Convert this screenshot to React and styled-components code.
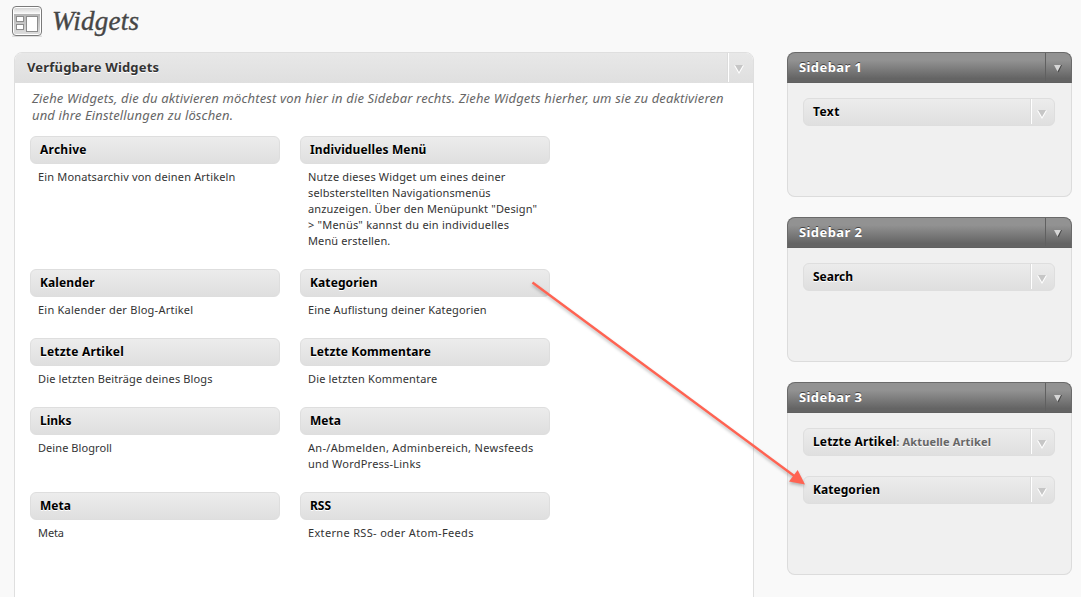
import React from "react";
import styled, { createGlobalStyle } from "styled-components";

const Global = createGlobalStyle`
  * { box-sizing: border-box; }
  body {
    margin: 0;
    background: #f9f9f9;
    color: #333;
    font-family: "Lucida Grande", "Noto Sans", "Open Sans", sans-serif;
    overflow: hidden;
  }
`;

const Screen = styled.div`
  position: relative;
  width: 1081px;
  height: 597px;
  overflow: hidden;
`;

const PageHead = styled.header`
  display: flex;
  align-items: flex-start;
  gap: 9px;
  height: 52px;
  padding: 4px 0 0 11px;
`;

const PageTitle = styled.h1`
  margin: 0;
  color: #464646;
  font: italic 400 27px/35px Georgia, "Liberation Serif", serif;
  letter-spacing: 0.25px;
  text-shadow: 0 1px 0 #fff;
  -webkit-text-stroke: 0.4px #464646;
`;

const Columns = styled.main`
  display: flex;
  align-items: flex-start;
  gap: 33px;
  padding-left: 14px;
`;

const Available = styled.section`
  width: 740px;
  height: 580px;
  border: 1px solid #dfdfdf;
  border-radius: 8px 8px 0 0;
  background: #fff;
`;

const AvailableHead = styled.div`
  display: flex;
  height: 30px;
  border-radius: 7px 7px 0 0;
  background: linear-gradient(#e8e8e8, #dfdfdf);
`;

const HeadTitle = styled.h3`
  flex: 1;
  margin: 0;
  padding-left: 12px;
  font-size: 13px;
  line-height: 29px;
  font-weight: 700;
  letter-spacing: ${(p) => p.$track || 0}px;
  text-shadow: 0 1px 0 #fff;
`;

const Toggle = styled.span`
  display: flex;
  width: ${(p) => p.$width || 25}px;
  margin-bottom: 1px;
  padding: ${(p) => p.$drop || 11}px 0 0 ${(p) => (p.$dark ? 7 : 5)}px;
  border-left: 1px solid ${(p) => (p.$dark ? "#606060" : "#fff")};
  box-shadow: -1px 0 0 ${(p) => (p.$dark ? "transparent" : "#dcdcdc")};
`;

const Intro = styled.div`
  padding: 7px 0 12px 17px;
  color: #666;
  font-size: 13px;
  line-height: 17px;
  font-style: italic;
`;

const Line = styled.div`
  white-space: nowrap;
  letter-spacing: ${(p) => p.$track || 0}px;
`;

const WidgetGrid = styled.div`
  display: grid;
  grid-template-columns: 250px 250px;
  gap: 20px;
  padding-left: 15px;
`;

const WidgetBar = styled.div`
  display: flex;
  height: 28px;
  border: 1px solid #dedede;
  border-radius: 6px;
  background: linear-gradient(#ececec, #dfdfdf);
`;

const WidgetName = styled.h4`
  flex: 1;
  margin: 0;
  padding-left: 9px;
  color: #000;
  font-size: 12px;
  line-height: 26px;
  font-weight: 700;
  white-space: nowrap;
  letter-spacing: ${(p) => p.$track || 0}px;
  text-shadow: 0 1px 0 #fff;
`;

const InstanceTitle = styled.span`
  color: #666;
  font-size: 11px;
  letter-spacing: 0.15px;
`;

const WidgetText = styled.div`
  padding: 5px 0 0 8px;
  font-size: 11px;
  line-height: 16px;
`;

const Sidebars = styled.aside`
  display: flex;
  flex-direction: column;
  gap: 20px;
  width: 285px;
`;

const SidebarBox = styled.section`
  height: ${(p) => p.$height}px;
  border-radius: 8px;
  background: #f0f0f0;
  box-shadow: inset 0 0 0 1px #dcdcdc;
`;

const SidebarHead = styled.div`
  display: flex;
  height: 31px;
  border: 1px solid #6a6a6a;
  border-bottom-color: #606060;
  border-radius: 8px 8px 0 0;
  background: linear-gradient(#929292 25%, #646464 88%);

  ${HeadTitle} {
    padding-left: 11px;
    color: #fff;
    text-shadow: 0 -1px 0 #444;
  }
`;

const SidebarList = styled.div`
  display: flex;
  flex-direction: column;
  gap: 20px;
  padding: 15px 17px 0 16px;
`;

const ArrowLayer = styled.svg`
  position: absolute;
  inset: 0;
  pointer-events: none;
`;

const ArrowShape = styled.g`
  filter: drop-shadow(0 2px 1.5px rgba(0, 0, 0, 0.25));
`;

const WidgetsIcon = () => (
  <svg width="32" height="34" viewBox="0 0 32 34">
    <defs>
      <linearGradient id="face" x1="0" y1="0" x2="0" y2="1">
        <stop offset="0" stopColor="#d6d6d6" />
        <stop offset="0.22" stopColor="#fafafa" />
        <stop offset="0.24" stopColor="#b4b4b4" />
        <stop offset="1" stopColor="#dcdcdc" />
      </linearGradient>
    </defs>
    <rect x="1" y="31.5" width="30" height="1.5" rx="0.7" fill="#dcdcdc" />
    <rect x="1.5" y="2.5" width="29" height="29" rx="3.5" fill="#fff" stroke="#7a7a7a" />
    <rect x="3" y="4" width="26" height="26" rx="1.5" fill="url(#face)" />
    <g fill="#fff" stroke="#8d8d8d">
      <rect x="5.5" y="12.5" width="7" height="5" />
      <rect x="5.5" y="20.5" width="7" height="5" />
      <rect x="15.5" y="12.5" width="11" height="15" />
    </g>
  </svg>
);

const Caret = ({ dark }) =>
  dark ? (
    <svg width="10" height="9" viewBox="0 0 10 9">
      <path d="M2 1H9L5.5 8.6Z" fill="#484848" />
      <path d="M1 1H8L4.5 7.5Z" fill="#d6d6d6" />
    </svg>
  ) : (
    <svg width="10" height="10" viewBox="0 0 10 10">
      <path d="M0 1.5H10L5 10Z" fill="#fff" />
      <path d="M1 1H9L5 8Z" fill="#c6c6c6" />
    </svg>
  );

const WIDGETS = [
  { name: "Archive", track: 0.25, lines: [["Ein Monatsarchiv von deinen Artikeln", 0.16]] },
  {
    name: "Individuelles Menü",
    track: 0.13,
    lines: [
      ["Nutze dieses Widget um eines deiner", 0.16],
      ["selbsterstellten Navigationsmenüs", 0.12],
      ['anzuzeigen. Über den Menüpunkt "Design"', 0.15],
      ['> "Menüs" kannst du ein individuelles', 0.21],
      ["Menü erstellen.", 0.13],
    ],
  },
  { name: "Kalender", track: 0.1, lines: [["Ein Kalender der Blog-Artikel", 0.24]] },
  { name: "Kategorien", track: 0.1, lines: [["Eine Auflistung deiner Kategorien", 0.15]] },
  { name: "Letzte Artikel", track: 0.2, lines: [["Die letzten Beiträge deines Blogs", 0.14]] },
  { name: "Letzte Kommentare", track: 0.12, lines: [["Die letzten Kommentare", 0.17]] },
  { name: "Links", lines: [["Deine Blogroll", 0.07]] },
  {
    name: "Meta",
    lines: [
      ["An-/Abmelden, Adminbereich, Newsfeeds", 0.3],
      ["und WordPress-Links", 0.22],
    ],
  },
  { name: "Meta", lines: [["Meta", -0.1]] },
  { name: "RSS", lines: [["Externe RSS- oder Atom-Feeds", 0.33]] },
];

const SIDEBARS = [
  { title: "Sidebar 1", height: 145, items: [{ name: "Text", track: 0.4 }] },
  { title: "Sidebar 2", height: 145, items: [{ name: "Search" }] },
  {
    title: "Sidebar 3",
    height: 193,
    items: [
      { name: "Letzte Artikel", track: 0.15, detail: "Aktuelle Artikel" },
      { name: "Kategorien", track: 0.05 },
    ],
  },
];

export default function App() {
  return (
    <Screen>
      <Global />
      <PageHead>
        <WidgetsIcon />
        <PageTitle>Widgets</PageTitle>
      </PageHead>
      <Columns>
        <Available>
          <AvailableHead>
            <HeadTitle $track={0.18}>Verfügbare Widgets</HeadTitle>
            <Toggle>
              <Caret />
            </Toggle>
          </AvailableHead>
          <Intro>
            <Line $track={0.145}>
              Ziehe Widgets, die du aktivieren möchtest von hier in die Sidebar rechts. Ziehe Widgets hierher, um sie zu deaktivieren
            </Line>
            <Line $track={0.15}>und ihre Einstellungen zu löschen.</Line>
          </Intro>
          <WidgetGrid>
            {WIDGETS.map((w, i) => (
              <div key={i}>
                <WidgetBar>
                  <WidgetName $track={w.track}>{w.name}</WidgetName>
                </WidgetBar>
                <WidgetText>
                  {w.lines.map(([text, track]) => (
                    <Line key={text} $track={track}>
                      {text}
                    </Line>
                  ))}
                </WidgetText>
              </div>
            ))}
          </WidgetGrid>
        </Available>
        <Sidebars>
          {SIDEBARS.map((s) => (
            <SidebarBox key={s.title} $height={s.height}>
              <SidebarHead>
                <HeadTitle $track={0.4}>{s.title}</HeadTitle>
                <Toggle $dark $width={26}>
                  <Caret dark />
                </Toggle>
              </SidebarHead>
              <SidebarList>
                {s.items.map((w) => (
                  <WidgetBar key={w.name}>
                    <WidgetName $track={w.track}>
                      {w.name}
                      {w.detail && <InstanceTitle>: {w.detail}</InstanceTitle>}
                    </WidgetName>
                    <Toggle $width={23} $drop={10}>
                      <Caret />
                    </Toggle>
                  </WidgetBar>
                ))}
              </SidebarList>
            </SidebarBox>
          ))}
        </Sidebars>
      </Columns>
      <ArrowLayer width="1081" height="597" viewBox="0 0 1081 597">
        <ArrowShape>
          <path d="M532.5 282.5L795 476.5" stroke="#ff6352" strokeWidth="2.4" />
          <path d="M805 484.5L789 481.5L797.7 470Z" fill="#ff6352" />
        </ArrowShape>
      </ArrowLayer>
    </Screen>
  );
}
